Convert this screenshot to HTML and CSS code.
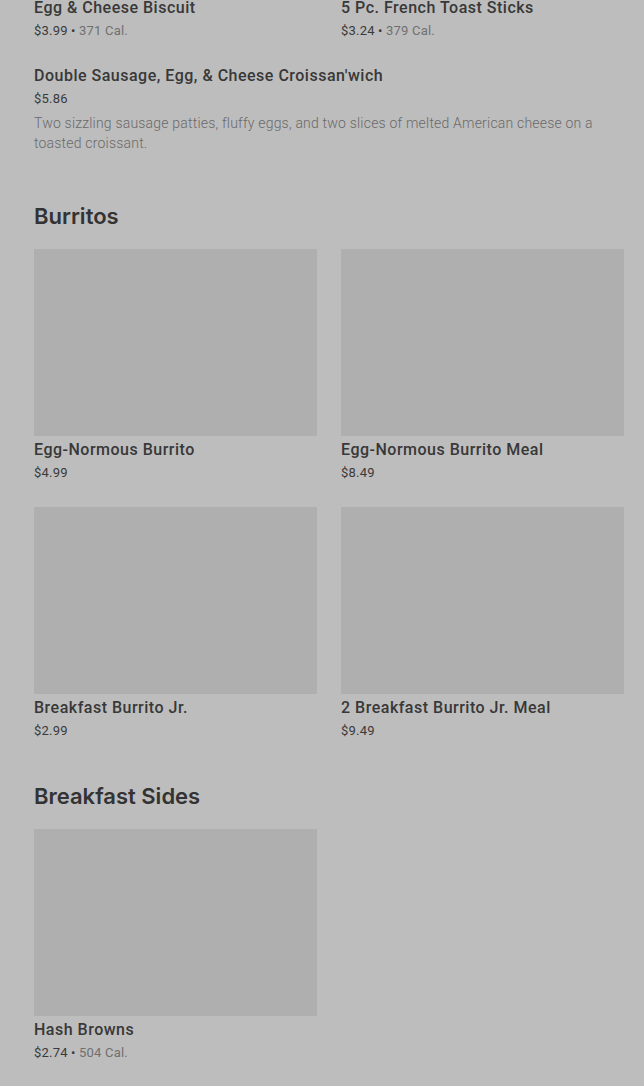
FILE: index.html
```html
<!DOCTYPE html>
<html>
<head>
<meta charset="utf-8">
<link rel="stylesheet" href="styles.css">
</head>
<body>
<div class="page">
  <div class="grid top-grid">
    <div class="item">
      <div class="title">Egg &amp; Cheese Biscuit</div>
      <div class="meta"><span class="price">$3.99</span> • <span class="cal">371 Cal.</span></div>
    </div>
    <div class="item">
      <div class="title">5 Pc. French Toast Sticks</div>
      <div class="meta"><span class="price">$3.24</span> • <span class="cal">379 Cal.</span></div>
    </div>
  </div>
  <div class="wide-item">
    <div class="title tall">Double Sausage, Egg, &amp; Cheese Croissan'wich</div>
    <div class="meta"><span class="price">$5.86</span></div>
    <div class="desc">Two sizzling sausage patties, fluffy eggs, and two slices of melted American cheese on a toasted croissant.</div>
  </div>

  <h2 class="section-title first">Burritos</h2>
  <div class="grid">
    <div class="card">
      <div class="thumb"></div>
      <div class="title">Egg-Normous Burrito</div>
      <div class="meta"><span class="price">$4.99</span></div>
    </div>
    <div class="card">
      <div class="thumb"></div>
      <div class="title">Egg-Normous Burrito Meal</div>
      <div class="meta"><span class="price">$8.49</span></div>
    </div>
    <div class="card">
      <div class="thumb"></div>
      <div class="title">Breakfast Burrito Jr.</div>
      <div class="meta"><span class="price">$2.99</span></div>
    </div>
    <div class="card">
      <div class="thumb"></div>
      <div class="title">2 Breakfast Burrito Jr. Meal</div>
      <div class="meta"><span class="price">$9.49</span></div>
    </div>
  </div>

  <h2 class="section-title">Breakfast Sides</h2>
  <div class="grid">
    <div class="card">
      <div class="thumb"></div>
      <div class="title">Hash Browns</div>
      <div class="meta"><span class="price">$2.74</span> • <span class="cal">504 Cal.</span></div>
    </div>
  </div>
</div>
</body>
</html>
```

FILE: styles.css
```css
html, body {
  margin: 0;
  padding: 0;
  background: #bdbdbd;
}
body {
  font-family: Roboto, "Liberation Sans", sans-serif;
  color: #333333;
  overflow: hidden;
}
.page {
  padding: 0 20px 0 34px;
  margin-top: -2px;
}
.grid {
  display: grid;
  grid-template-columns: 283px 283px;
  column-gap: 24px;
  row-gap: 24px;
}
.title {
  font-size: 16px;
  font-weight: 500;
  letter-spacing: 0.5px;
  line-height: 20px;
  color: #383838;
}
.title.tall {
  line-height: 24px;
}
.meta {
  font-size: 13px;
  letter-spacing: 0.2px;
  line-height: 20px;
  margin-top: 3px;
  color: #3a3a3a;
}
.cal {
  color: #707070;
}
.wide-item {
  margin-top: 23px;
}
.wide-item .meta {
  margin-top: 1px;
}
.desc {
  font-size: 14px;
  font-weight: 300;
  letter-spacing: 0.2px;
  line-height: 20px;
  color: #6a6a6a;
  margin-top: 4px;
  max-width: 580px;
}
.section-title {
  font-family: Inter, sans-serif;
  font-size: 22px;
  font-weight: 600;
  letter-spacing: 0;
  line-height: 28px;
  color: #333333;
  margin: 49px 0 19px 0;
}
.thumb {
  height: 187px;
  background: #afafaf;
  margin-bottom: 4px;
}
.section-title:not(.first) {
  margin-top: 41px;
}
```
